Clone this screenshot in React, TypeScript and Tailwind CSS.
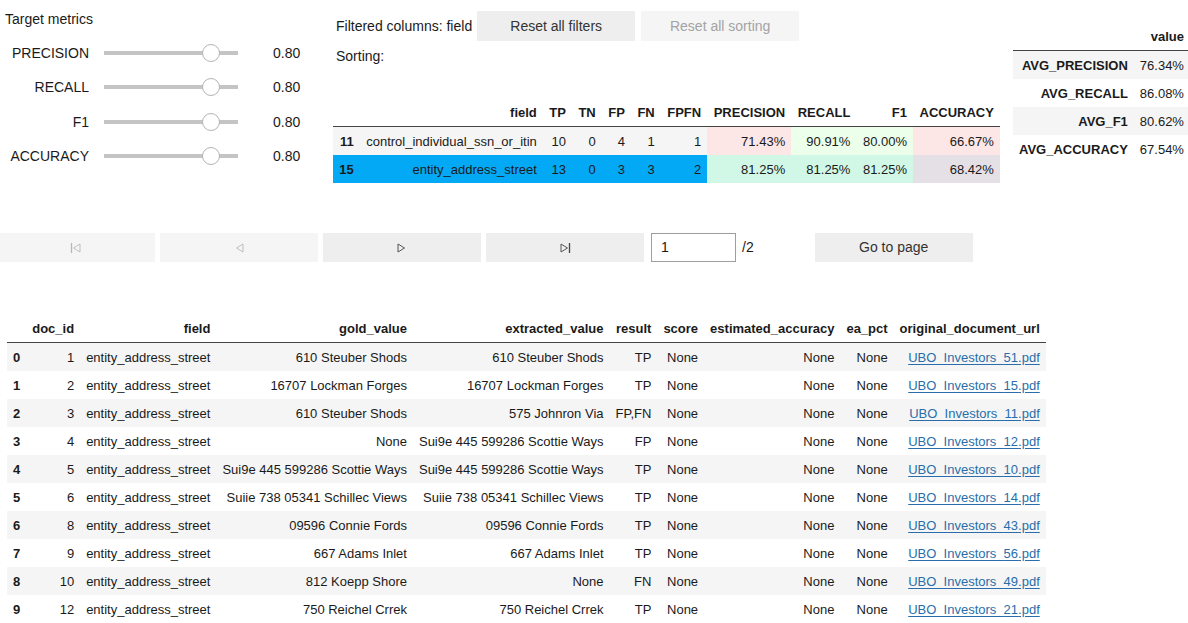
import React from "react";

const METRICS = ["PRECISION", "RECALL", "F1", "ACCURACY"];

const SUMMARY_ROWS = [
  {
    idx: "11",
    field: "control_individual_ssn_or_itin",
    counts: ["10", "0", "4", "1", "1"],
    scores: [
      { v: "71.43%", bg: "bg-[#fde6e6]" },
      { v: "90.91%", bg: "bg-[#ebffea]" },
      { v: "80.00%", bg: "bg-[#ebffea]" },
      { v: "66.67%", bg: "bg-[#fde6e6]" },
    ],
    rowBg: "bg-[#f5f5f5]",
  },
  {
    idx: "15",
    field: "entity_address_street",
    counts: ["13", "0", "3", "3", "2"],
    scores: [
      { v: "81.25%", bg: "bg-[#d1f7e6]" },
      { v: "81.25%", bg: "bg-[#d1f7e6]" },
      { v: "81.25%", bg: "bg-[#d1f7e6]" },
      { v: "68.42%", bg: "bg-[#e5dfe6]" },
    ],
    rowBg: "bg-[#03a9f4]",
  },
];

const AVERAGES = [
  ["AVG_PRECISION", "76.34%"],
  ["AVG_RECALL", "86.08%"],
  ["AVG_F1", "80.62%"],
  ["AVG_ACCURACY", "67.54%"],
];

const DOCS = [
  ["1", "610 Steuber Shods", "610 Steuber Shods", "TP", "51"],
  ["2", "16707 Lockman Forges", "16707 Lockman Forges", "TP", "15"],
  ["3", "610 Steuber Shods", "575 Johnron Via", "FP,FN", "11"],
  ["4", "None", "Sui9e 445 599286 Scottie Ways", "FP", "12"],
  ["5", "Sui9e 445 599286 Scottie Ways", "Sui9e 445 599286 Scottie Ways", "TP", "10"],
  ["6", "Suiie 738 05341 Schillec Views", "Suiie 738 05341 Schillec Views", "TP", "14"],
  ["8", "09596 Connie Fords", "09596 Connie Fords", "TP", "43"],
  ["9", "667 Adams Inlet", "667 Adams Inlet", "TP", "56"],
  ["10", "812 Koepp Shore", "None", "FN", "49"],
  ["12", "750 Reichel Crrek", "750 Reichel Crrek", "TP", "21"],
];

const td = "px-[6px] py-[6.5px] leading-[15px] text-right whitespace-nowrap";
const th = "px-[6px] py-[6.5px] leading-[15px] text-right whitespace-nowrap font-bold align-bottom";
// the per-field table sits a little looser in the screenshot
const std = "px-[6.25px] py-[6.5px] leading-[15px] text-right whitespace-nowrap";
const sth = "px-[6.25px] py-[6.5px] leading-[15px] text-right whitespace-nowrap font-bold align-bottom";

function Slider() {
  return (
    <div className="relative w-[134px] h-[18px] flex items-center">
      <div className="w-full h-[4px] bg-[#c4c4c4]" />
      <div className="absolute left-[98px] top-0 w-[18px] h-[18px] rounded-full bg-white border border-[#b4b4b4]" />
    </div>
  );
}

function PageIcon({ kind, disabled }: { kind: "first" | "prev" | "next" | "last"; disabled: boolean }) {
  const c = disabled ? "#b8b8b8" : "#444";
  const left = kind === "first" || kind === "prev";
  return (
    <svg width="12" height="14" viewBox="0 0 12 14">
      {left ? (
        <polygon points="10,3 10,11 3.5,7" fill="none" stroke={c} strokeWidth="0.9" />
      ) : (
        <polygon points="2,3 2,11 8.5,7" fill="none" stroke={c} strokeWidth="0.9" />
      )}
      {kind === "first" && <line x1="1.5" y1="2" x2="1.5" y2="12" stroke={c} strokeWidth="1.3" />}
      {kind === "last" && <line x1="10.5" y1="2" x2="10.5" y2="12" stroke={c} strokeWidth="1.3" />}
    </svg>
  );
}

export default function App() {
  return (
    <div className="w-[1188px] h-[623px] overflow-hidden bg-white text-[#1a1a1a] font-['Liberation_Sans',Arial,sans-serif]">
      {/* Top area */}
      <div className="flex h-[200px]">
        {/* Target metric sliders */}
        <div className="w-[333px] shrink-0 text-[14px]">
          <div className="pl-[5px] pt-[11px] leading-[16px]">Target metrics</div>
          <div className="mt-[12px] flex flex-col gap-[6.3px]">
            {METRICS.map((m) => (
              <div key={m} className="flex items-center h-[28px]">
                <div className="w-[89px] text-right leading-[16px]">{m}</div>
                <div className="ml-[15px]">
                  <Slider />
                </div>
                <div className="ml-[35px] leading-[16px]">0.80</div>
              </div>
            ))}
          </div>
        </div>

        {/* Per-field summary */}
        <div className="w-[680px] shrink-0">
          <div className="pl-[3px] text-[14px]">
            <div className="flex items-center mt-[11px] h-[30px]">
              <span>Filtered columns: field</span>
              <button className="ml-[5px] w-[158px] h-[30px] bg-[#eeeeee] text-[#333]">Reset all filters</button>
              <button className="ml-[6px] w-[158px] h-[30px] bg-[#f5f5f5] text-[#a3a3a3]">Reset all sorting</button>
            </div>
            <div className="mt-[7px] leading-[16px]">Sorting:</div>
          </div>
          <table className="mt-[34px] text-[13px]">
            <thead>
              <tr className="border-b border-[#444]">
                <th className={sth}></th>
                <th className={sth}>field</th>
                <th className={sth}>TP</th>
                <th className={sth}>TN</th>
                <th className={sth}>FP</th>
                <th className={sth}>FN</th>
                <th className={sth}>FPFN</th>
                <th className={sth}>PRECISION</th>
                <th className={sth}>RECALL</th>
                <th className={sth}>F1</th>
                <th className={sth}>ACCURACY</th>
              </tr>
            </thead>
            <tbody>
              {SUMMARY_ROWS.map((r) => (
                <tr key={r.idx}>
                  <th className={`${sth} text-left ${r.rowBg}`}>{r.idx}</th>
                  <td className={`${std} ${r.rowBg}`}>{r.field}</td>
                  {r.counts.map((c, i) => (
                    <td key={i} className={`${std} ${r.rowBg}`}>
                      {c}
                    </td>
                  ))}
                  {r.scores.map((s, i) => (
                    <td key={i} className={`${std} ${s.bg}`}>
                      {s.v}
                    </td>
                  ))}
                </tr>
              ))}
            </tbody>
          </table>
        </div>

        {/* Averages */}
        <div className="flex-1 pt-[22px] overflow-hidden">
          <table className="text-[13px]">
            <thead>
              <tr className="border-b border-[#444]">
                <th className={th}></th>
                <th className={th}>value</th>
              </tr>
            </thead>
            <tbody>
              {AVERAGES.map(([k, v], i) => (
                <tr key={k} className={i % 2 === 0 ? "bg-[#f5f5f5]" : "bg-white"}>
                  <th className={th}>{k}</th>
                  <td className={td}>{v}</td>
                </tr>
              ))}
            </tbody>
          </table>
        </div>
      </div>

      {/* Pagination */}
      <div className="mt-[33px] flex items-center h-[29px] ml-[-3px] text-[14px]">
        <div className="flex gap-[5px]">
          <button className="w-[158px] h-[29px] bg-[#f5f5f5] flex items-center justify-center">
            <PageIcon kind="first" disabled />
          </button>
          <button className="w-[158px] h-[29px] bg-[#f5f5f5] flex items-center justify-center">
            <PageIcon kind="prev" disabled />
          </button>
          <button className="w-[158px] h-[29px] bg-[#eeeeee] flex items-center justify-center">
            <PageIcon kind="next" disabled={false} />
          </button>
          <button className="w-[158px] h-[29px] bg-[#eeeeee] flex items-center justify-center">
            <PageIcon kind="last" disabled={false} />
          </button>
        </div>
        <div className="ml-[7px] w-[85px] h-[29px] border border-[#9e9e9e] flex items-center pl-[9px]">1</div>
        <span className="ml-[6px]">/2</span>
        <button className="ml-[61px] w-[158px] h-[29px] bg-[#eeeeee] text-[#333]">Go to page</button>
      </div>

      {/* Document table */}
      <table className="mt-[52px] ml-[7px] text-[13px]">
        <thead>
          <tr className="border-b border-[#444]">
            <th className={th}></th>
            <th className={th}>doc_id</th>
            <th className={th}>field</th>
            <th className={th}>gold_value</th>
            <th className={th}>extracted_value</th>
            <th className={th}>result</th>
            <th className={th}>score</th>
            <th className={th}>estimated_accuracy</th>
            <th className={th}>ea_pct</th>
            <th className={th}>original_document_url</th>
          </tr>
        </thead>
        <tbody>
          {DOCS.map((d, i) => (
            <tr key={i} className={i % 2 === 0 ? "bg-[#f5f5f5]" : "bg-white"}>
              <th className={`${th} text-left`}>{i}</th>
              <td className={td}>{d[0]}</td>
              <td className={td}>entity_address_street</td>
              <td className={td}>{d[1]}</td>
              <td className={td}>{d[2]}</td>
              <td className={td}>{d[3]}</td>
              <td className={td}>None</td>
              <td className={td}>None</td>
              <td className={td}>None</td>
              <td className={td}>
                <a className="text-[#296eaa] underline underline-offset-2">UBO_Investors_{d[4]}.pdf</a>
              </td>
            </tr>
          ))}
        </tbody>
      </table>
    </div>
  );
}
